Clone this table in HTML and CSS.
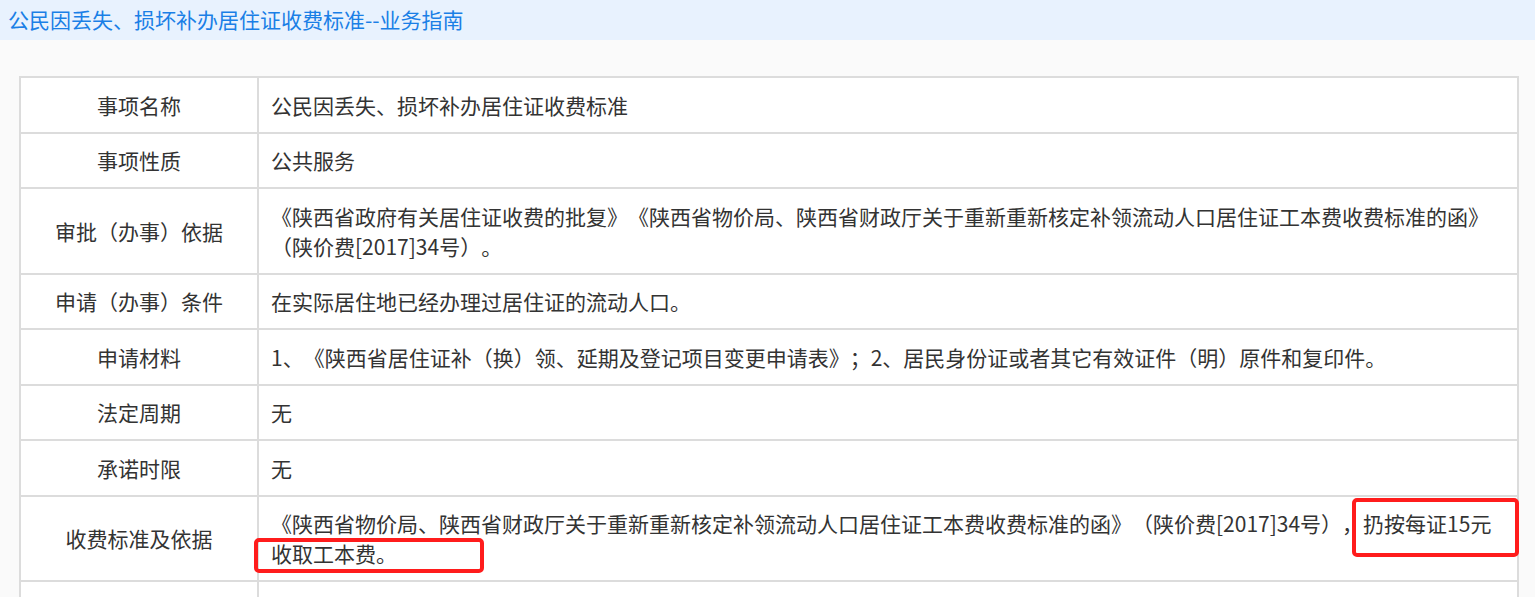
FILE: index.html
```html
<!DOCTYPE html>
<html lang="zh-CN">
<head>
<meta charset="utf-8">
<title>公民因丢失、损坏补办居住证收费标准--业务指南</title>
<link rel="stylesheet" href="styles.css">
</head>
<body>
<div class="page">
  <div class="title-bar">公民因丢失、损坏补办居住证收费标准--业务指南</div>
  <div class="content">
    <table class="guide">
      <tr><td class="label">事项名称</td><td class="value">公民因丢失、损坏补办居住证收费标准</td></tr>
      <tr><td class="label">事项性质</td><td class="value">公共服务</td></tr>
      <tr><td class="label">审批（办事）依据</td><td class="value">《陕西省政府有关居住证收费的批复》《陕西省物价局、陕西省财政厅关于重新重新核定补领流动人口居住证工本费收费标准的函》（陕价费[2017]34号）。</td></tr>
      <tr><td class="label">申请（办事）条件</td><td class="value">在实际居住地已经办理过居住证的流动人口。</td></tr>
      <tr><td class="label">申请材料</td><td class="value">1、《陕西省居住证补（换）领、延期及登记项目变更申请表》；2、居民身份证或者其它有效证件（明）原件和复印件。</td></tr>
      <tr><td class="label">法定周期</td><td class="value">无</td></tr>
      <tr><td class="label">承诺时限</td><td class="value">无</td></tr>
      <tr><td class="label">收费标准及依据</td><td class="value">《陕西省物价局、陕西省财政厅关于重新重新核定补领流动人口居住证工本费收费标准的函》（陕价费[2017]34号），扔按每证15元收取工本费。</td></tr>
      <tr><td class="label">&nbsp;</td><td class="value">&nbsp;</td></tr>
    </table>
  </div>
  <div class="mark mark-a"></div>
  <div class="mark mark-b"></div>
</div>
</body>
</html>
```
FILE: styles.css
```css
html, body {
  margin: 0;
  padding: 0;
}
body {
  background: #fafafa;
  font-family: "Noto Sans CJK SC", "Noto Sans", "Liberation Sans", sans-serif;
  color: #333;
  text-spacing-trim: space-all;
}
.page {
  position: relative;
  width: 1535px;
}
.title-bar {
  height: 40px;
  line-height: 38px;
  background: #e8f2fe;
  color: #1a7fe6;
  font-size: 21px;
  padding-left: 8px;
  box-sizing: border-box;
}
.content {
  padding: 36px 0 0 19px;
}
.guide {
  width: 1500px;
  border-collapse: separate;
  border-spacing: 0;
  border: 1px solid #dcdcdc;
  background: #fff;
  font-size: 21px;
  line-height: 30px;
}
.guide td {
  border: 1px solid #dcdcdc;
  padding: 11.75px 12px;
  vertical-align: middle;
}
.guide .label {
  width: 238px;
  box-sizing: border-box;
  text-align: center;
  padding: 11.75px 4px;
}
.guide .value {
  text-align: left;
}
.mark {
  position: absolute;
  border: 4px solid #ff1c1c;
  border-radius: 5px;
  box-sizing: border-box;
}
.mark-a {
  left: 1352px;
  top: 498px;
  width: 167px;
  height: 59px;
}
.mark-b {
  left: 254px;
  top: 538px;
  width: 230px;
  height: 35px;
}
```
